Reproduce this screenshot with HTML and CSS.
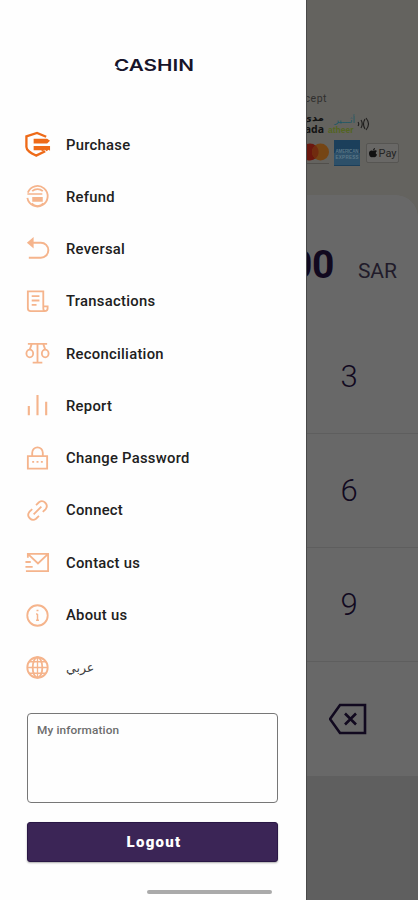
FILE: index.html
```html
<!DOCTYPE html>
<html lang="en">
<head>
<meta charset="utf-8">
<meta name="viewport" content="width=device-width">
<title>Cashin</title>
<link rel="stylesheet" href="styles.css">
</head>
<body>
<div class="screen">
<aside class="drawer">
  <svg class="logo" width="84" height="20" viewBox="-1 -2 84 20"><text x="-1" y="13" textLength="80" lengthAdjust="spacingAndGlyphs">CASHIN</text><path d="M-2 8h3l2 2-5 1z" fill="#fff"/></svg>
  <nav class="menu">
    <a class="item first"><svg viewBox="0 0 28 28"><path d="M23 6 13.500 2 2.500 5.500v11c0 4 5 6.500 10 9L22 21" stroke-width="2.400"/><path d="M10 8h14l3 2.200-3 2.800H10zM10 15.500h17v5l-1.500-1-2 1.500-2-1.500-2 1.500-2-1H10z" fill="currentColor" stroke="none"/></svg><span>Purchase</span></a>
    <a class="item"><svg viewBox="0 0 28 28"><path d="M4 10a10.600 10.600 0 1 1-.500 5.500M8.500 8.500a8 8 0 0 1 11 0" /><path d="M8 21a8 8 0 0 0 12 0M3.500 11.500H19" stroke-width="1.500"/><path d="M9.500 15.500h9v3h-9z" fill="currentColor"/></svg><span>Refund</span></a>
    <a class="item"><svg viewBox="0 0 28 28"><path d="M5 7h12.500a7 7 0 0 1 0 15.500H5" stroke-width="2"/><path d="m3 7 7-6v12z" fill="currentColor" stroke="none"/></svg><span>Reversal</span></a>
    <a class="item"><svg viewBox="0 0 28 28"><path d="M20 19V3.500H4V21a3 3 0 0 0 3 3h14.500a3 3 0 0 0 3-3v-2H20v2a3 3 0 0 0 1.500 3M8 8.500h8M8 13h8M8 17.500h5"/></svg><span>Transactions</span></a>
    <a class="item"><svg viewBox="0 0 28 28"><path d="M4 4h20M14 4v19M9 23.500h10"/><ellipse cx="6" cy="14" rx="3.500" ry="4"/><ellipse cx="22" cy="14" rx="3.500" ry="4"/><path d="m6 10 2-6m14 6-2-6"/></svg><span>Reconciliation</span></a>
    <a class="item"><svg viewBox="0 0 28 28"><path d="M5 14.500V24M14 3v21M23 10v14" stroke-width="2.200"/></svg><span>Report</span></a>
    <a class="item"><svg viewBox="0 0 28 28"><path d="M4 11.500h20v13H4zM8.500 11.500V8a5.500 5.500 0 0 1 11 0v3.500"/><path d="M8.500 17.500h2m2.500 0h2m2.500 0h2"/></svg><span>Change Password</span></a>
    <a class="item"><svg viewBox="0 0 28 28"><path d="m10 18 8-8M12.500 8.500l3-3a5 5 0 0 1 7 7l-3 3M8.500 12.500l-3 3a5 5 0 0 0 7 7l3-3"/></svg><span>Connect</span></a>
    <a class="item"><svg viewBox="0 0 28 28"><path d="M4 9V5h21v18H4M4 5l10.500 10L25 5M1.500 13.500H7M1.500 18.500H9M2 23h4" stroke-width="1.900"/></svg><span>Contact us</span></a>
    <a class="item"><svg viewBox="0 0 28 28"><circle cx="14" cy="14" r="10.600"/><path d="M14 12.500V19M12.500 12.500H14M12.500 19h3M13 8.800h2" stroke-width="1.500"/></svg><span>About us</span></a>
    <a class="item"><svg viewBox="0 0 28 28"><circle cx="14" cy="14" r="10.600"/><ellipse cx="14" cy="14" rx="5" ry="10.600"/><path d="M14 4v20M4 14h20M6 8h16M6 20h16" stroke-width="1.400"/></svg><span class="arabic" lang="ar">عربي</span></a>
  </nav>
  <section class="info">My information</section>
  <button class="logout">Logout</button>
  <div class="home"></div>
</aside>
<main class="pay">
  <header class="accept">
    <div class="caption">We accept</div>
    <div class="brands">
      <div class="mada"><span lang="ar">مدى</span><b>mada</b></div>
      <div class="ethaq"><span lang="ar">أثـــير</span><b>atheer</b></div>
      <svg width="13" height="14" viewBox="0 0 13 14" fill="none" stroke="#1e1d1c" stroke-width="1.100"><path d="M1 5q1.500 2 0 4M4 3q2.500 4 0 8M8 2q-3 5 0 10M9 1q5 6 0 12"/></svg>
    </div>
    <div class="cards">
      <svg width="23" height="24" viewBox="0 0 23 24"><circle cx="3" cy="11" r="8.500" fill="#6b170e"/><circle cx="13.500" cy="11" r="8.500" fill="#754514"/><path d="M8.300 4.300a8.500 8.500 0 0 1 0 13.400 8.500 8.500 0 0 1 0-13.400z" fill="#712b0f"/><path d="M0 22.500h22" stroke="#514f4b"/></svg>
      <svg class="amex" width="26" height="26" viewBox="0 0 26 26"><path fill="#1b3f5b" d="M0 0h26v26H0z"/><path fill="#2d5069" d="M0 13h26v12H0z"/><text x="1.500" y="12.500" textLength="23">AMERICAN</text><text x="1.500" y="18.500" textLength="23">EXPRESS</text></svg>
      <div class="apple"><svg width="8" height="10" viewBox="0 0 8 10"><path fill="#111" d="M4 3C2.500 2 0 2.500 0 5.500S2 10 4 9c2 1 3.500-.500 4-2.500-1.500-.500-1.800-2.500 0-3.500C7 2 5.500 2.300 4 3zM4 2.400C4 1 5 0 6 0c0 1.400-1 2.400-2 2.400z"/></svg><span>Pay</span></div>
    </div>
  </header>
  <section class="panel">
    <div class="amount"><strong>0.00</strong><span>SAR</span></div>
    <div class="keys">
      <div class="key">3</div><div class="key">6</div><div class="key">9</div>
      <div class="key"><svg width="40" height="32" viewBox="0 0 40 32" fill="none" stroke="#11091f" stroke-width="2.600"><path d="M11 2h25v28H11L1 16zM16 10.500l11 11m0-11-11 11"/></svg></div>
    </div>
  </section>
</main>
</div>
</body>
</html>
```
FILE: styles.css
```css
* { box-sizing: border-box; }
body { margin: 0; font-family: Roboto, "Liberation Sans", sans-serif; }
.screen { display: grid; grid-template-columns: 306px 112px; width: 418px; height: 900px; overflow: hidden; }
.drawer { display: flex; flex-direction: column; background: #fefefe; padding: 56px 28px 0 27px; height: 900px; }
.logo { display: block; margin-left: 87px; flex: none; }
.logo text { font: 600 16px Inter, sans-serif; fill: #17142a; }
.menu { display: flex; flex-direction: column; margin-top: 42.500px; }
.item { display: flex; align-items: center; height: 52.270px; gap: 15px; margin-left: -3px; font-size: 14.800px; font-weight: 500; letter-spacing: .28px; color: #202020; }
.item svg { width: 27px; height: 27px; flex: none; fill: none; stroke: currentColor; stroke-width: 1.900; color: #f5b48c; }
.item.first svg { color: #ee6a18; }
.item .arabic { font: 12.500px "DejaVu Sans", sans-serif; letter-spacing: 0; color: #444; }
.info { height: 90px; margin-top: 19.500px; flex: none; border: 1px solid #777; border-radius: 4px; padding: 9px 9px; font-size: 11.800px; line-height: 14px; font-weight: 500; letter-spacing: .12px; color: #6c6c6c; }
.logout { height: 40px; flex: none; margin-top: 19.500px; border: 1px solid #291745; border-radius: 3px; background: #3b2556; color: #fff; font: 900 15px Roboto, sans-serif; letter-spacing: 1.300px; padding: 0 0 0 3px; box-shadow: 0 1px 2px #0005; }
.home { height: 4px; width: 125px; margin: 28px 0 0 120px; border-radius: 2px; background: #aaa; }
.pay { display: flex; flex-direction: column; height: 900px; overflow: hidden; background: #5f5f5f; border-left: 1px solid #494949; color: #11091f; }
.accept { height: 195px; flex: none; background: #64635f; padding-top: 92px; }
.caption { width: 70px; margin-left: -50px; text-align: right; white-space: nowrap; font-size: 10.500px; line-height: 14px; letter-spacing: .5px; color: #302f2e; }
.brands { display: flex; align-items: center; height: 31px; margin-top: 2px; }
.mada { display: flex; flex-direction: column; align-items: flex-end; flex: none; width: 37px; margin-left: -20px; color: #111; }
.mada span { font: 700 10px/12px "DejaVu Sans", sans-serif; }
.mada b { font: 700 10.500px/11px "Open Sans", sans-serif; }
.ethaq { display: flex; flex-direction: column; flex: none; width: 27px; margin: 2px 2px 0 4px; color: #1f5966; }
.ethaq span { font: 9px/11px "DejaVu Sans", sans-serif; text-align: right; white-space: nowrap; }
.ethaq b { font: 700 8.500px/9px "Liberation Sans", sans-serif; color: #536521; }
.cards { display: flex; align-items: center; height: 28px; }
.cards > svg { flex: none; }
.amex { margin-left: 4px; }
.amex text { font: 700 4.500px "Liberation Sans", sans-serif; fill: #5c7888; }
.apple { display: flex; align-items: center; justify-content: center; gap: 2px; width: 33px; height: 20px; margin-left: 6px; border: 1px solid #565552; border-radius: 2px; background: #696866; font-size: 11px; color: #242424; }
.panel { height: 581px; flex: none; background: radial-gradient(circle at 0 22px, #686868 21.500px, #64635f 22px) right top / 22px 22px no-repeat, linear-gradient(#686868, #686868); }
.amount { height: 125px; display: flex; justify-content: flex-end; align-items: baseline; padding: 46px 21px 0 0; }
.amount strong { font-size: 39px; line-height: 48px; letter-spacing: -.5px; }
.amount span { font-size: 21px; margin-left: 24px; color: #211b2a; }
.keys { width: 139px; margin-left: -27.500px; }
.key { height: 114px; display: flex; align-items: center; justify-content: center; font-size: 31px; font-weight: 300; border-bottom: 1px solid #5e5e5e; }
.key:last-child { border: 0; }
```
